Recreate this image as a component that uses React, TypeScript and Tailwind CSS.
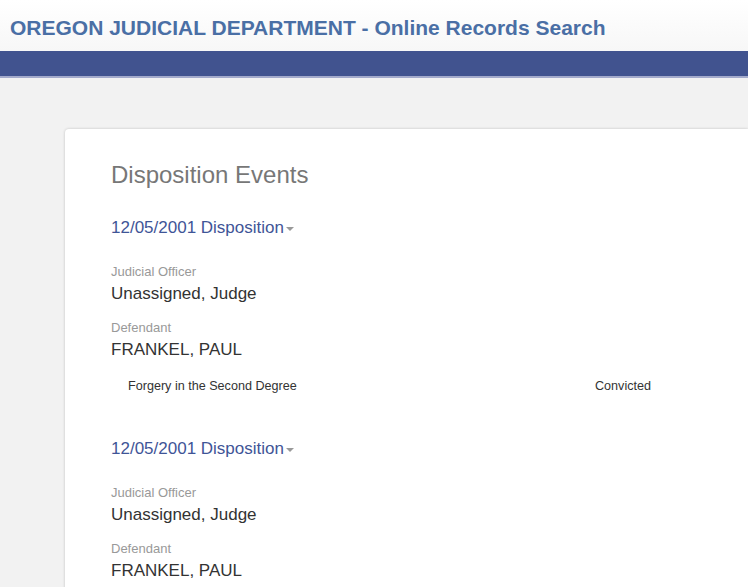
import React from 'react';

const font = { fontFamily: '"Liberation Sans", Arial, sans-serif' };

function Caret() {
  return <span className="inline-block ml-[2px] align-middle border-t-[4px] border-t-[#999] border-x-[4px] border-x-transparent" />;
}

function Disposition({ charge }: { charge?: boolean }) {
  return (
    <div>
      <div className="text-[17px] leading-[24px] text-[#3f5597]">
        12/05/2001 Disposition<Caret />
      </div>
      <div className="mt-[23px] mb-[1px] text-[13px] leading-[18px] text-[#999]">Judicial Officer</div>
      <div className="text-[17px] leading-[24px] text-[#333]">Unassigned, Judge</div>
      <div className="mt-[13px] mb-[1px] text-[13px] leading-[18px] text-[#999]">Defendant</div>
      <div className="text-[17px] leading-[24px] text-[#333]">FRANKEL, PAUL</div>
      {charge && (
        <div className="flex mt-[16px] pl-[17px] text-[12.6px] leading-[16px] text-[#333]">
          <div className="w-[467px]">Forgery in the Second Degree</div>
          <div>Convicted</div>
        </div>
      )}
    </div>
  );
}

export default function App() {
  return (
    <div className="h-[587px] bg-[#f2f2f2] overflow-hidden" style={font}>
      <div className="h-[51px] bg-gradient-to-b from-white to-[#f7f7f7] flex items-center pl-[10px] pt-[4px]">
        <h1 className="text-[21px] font-bold text-[#4a6fa5]">
          OREGON JUDICIAL DEPARTMENT - Online Records Search
        </h1>
      </div>
      <div className="h-[27px] bg-[#41538f] border-b-[2px] border-b-[#a3aacb]" />
      <div className="pt-[51px] pl-[65px]">
        <div className="bg-white rounded-tl-[4px] shadow-[0_0_3px_rgba(0,0,0,0.2)] pl-[46px] pt-[30px] pb-[40px] min-h-[500px]">
          <h2 className="text-[24px] leading-[32px] text-[#777]">Disposition Events</h2>
          <div className="mt-[25px]">
            <Disposition charge />
          </div>
          <div className="mt-[43px]">
            <Disposition />
          </div>
        </div>
      </div>
    </div>
  );
}
